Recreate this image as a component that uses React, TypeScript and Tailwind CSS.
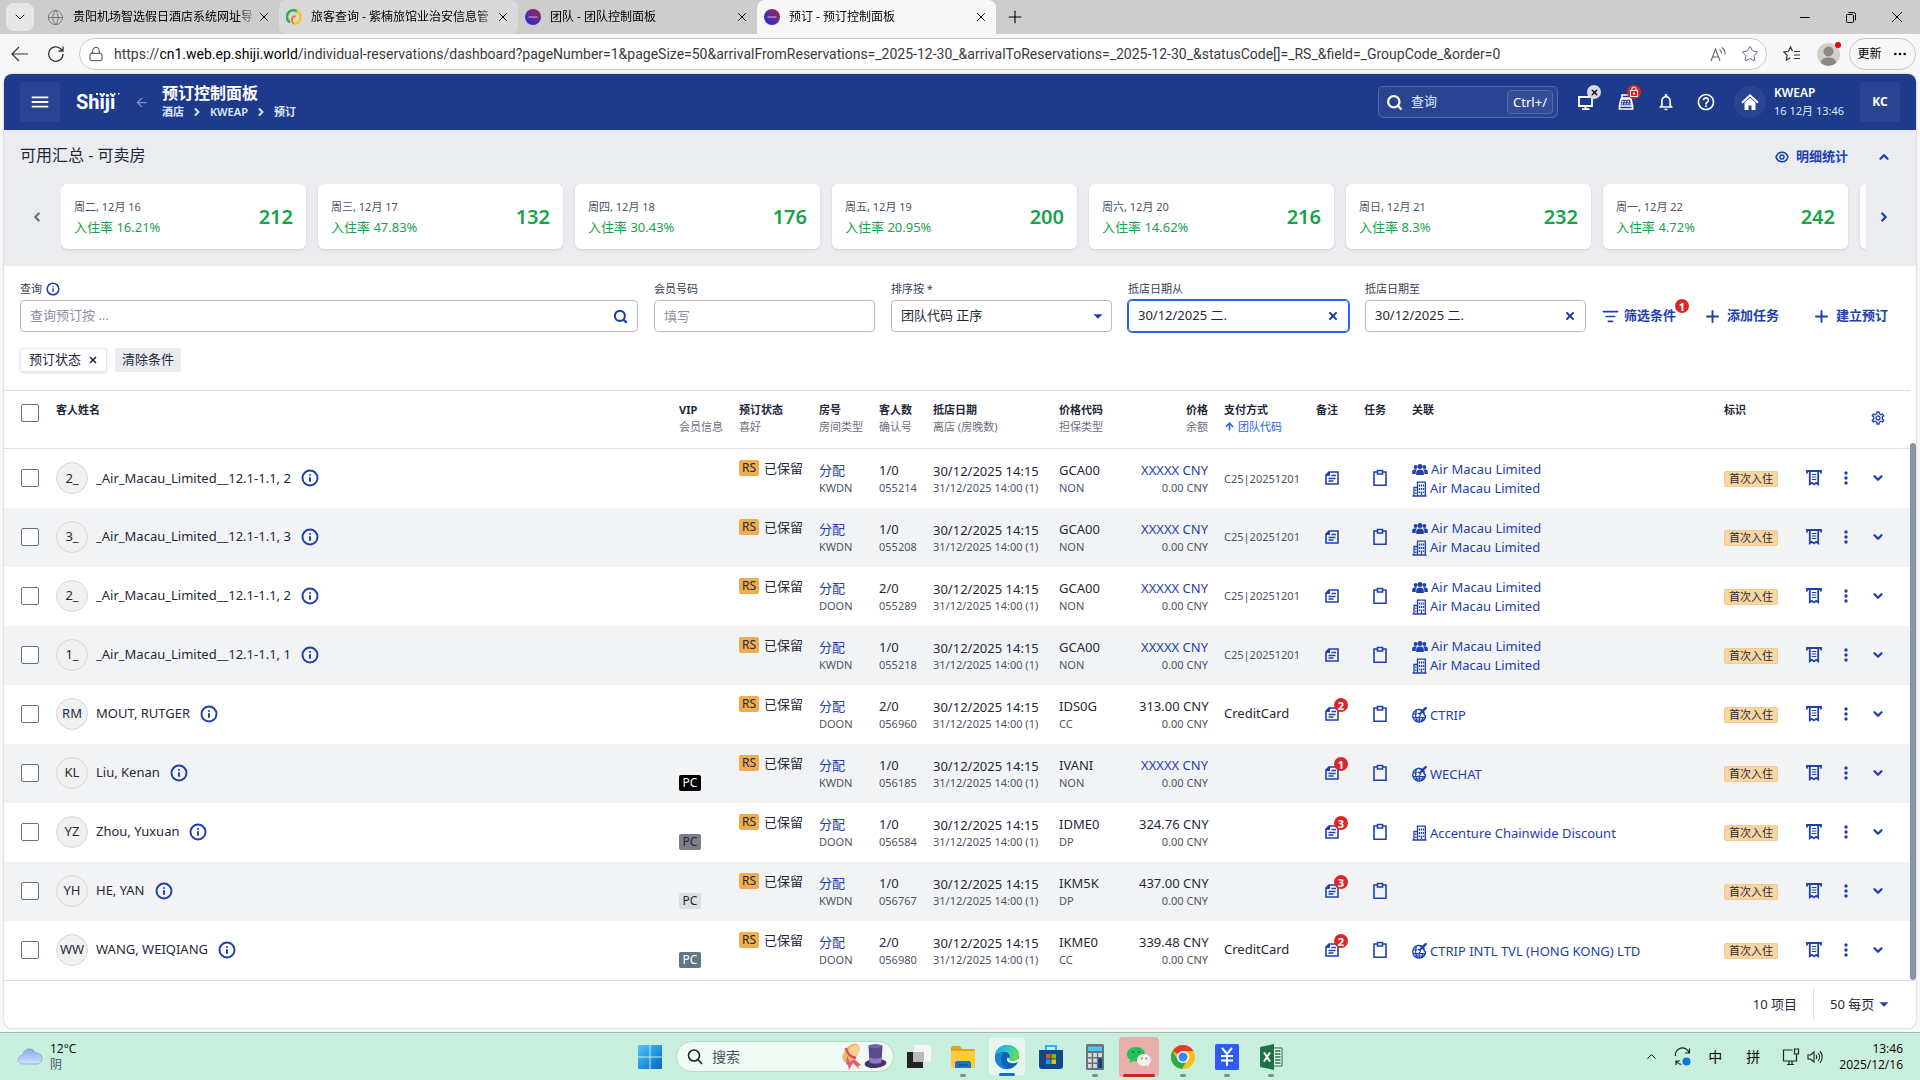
import type { ReactNode } from "react";
import {
  MdArrowBack,
  MdArrowDropDown,
  MdHelpOutline,
  MdLockOutline,
  MdMenu,
  MdMoreVert,
  MdNotificationsNone,
  MdOutlineSettings,
} from "react-icons/md";
import {
  ArrowUp,
  ChevronDown,
  ChevronLeft,
  ChevronRight,
  ChevronUp,
  Globe,
  Info,
  ListFilter,
  Lock,
  MoreHorizontal,
  Plus,
  Search,
  Star,
  X,
} from "lucide-react";

type LinkKind = "group" | "company" | "agent";

type Reservation = {
  initials: string;
  name: string;
  vip?: string;
  room: string;
  guests: string;
  conf: string;
  rate: string;
  guarantee: string;
  price: string | null;
  payment?: string;
  groupCode?: string;
  notes: number;
  links: { kind: LinkKind; label: string }[];
};

const macau: Reservation["links"] = [
  { kind: "group", label: "Air Macau Limited" },
  { kind: "company", label: "Air Macau Limited" },
];

const reservations: Reservation[] = [
  { initials: "2_", name: "_Air_Macau_Limited__12.1-1.1, 2", room: "KWDN", guests: "1/0", conf: "055214", rate: "GCA00", guarantee: "NON", price: null, groupCode: "C25|20251201", notes: 0, links: macau },
  { initials: "3_", name: "_Air_Macau_Limited__12.1-1.1, 3", room: "KWDN", guests: "1/0", conf: "055208", rate: "GCA00", guarantee: "NON", price: null, groupCode: "C25|20251201", notes: 0, links: macau },
  { initials: "2_", name: "_Air_Macau_Limited__12.1-1.1, 2", room: "DOON", guests: "2/0", conf: "055289", rate: "GCA00", guarantee: "NON", price: null, groupCode: "C25|20251201", notes: 0, links: macau },
  { initials: "1_", name: "_Air_Macau_Limited__12.1-1.1, 1", room: "KWDN", guests: "1/0", conf: "055218", rate: "GCA00", guarantee: "NON", price: null, groupCode: "C25|20251201", notes: 0, links: macau },
  { initials: "RM", name: "MOUT, RUTGER", room: "DOON", guests: "2/0", conf: "056960", rate: "IDS0G", guarantee: "CC", price: "313.00", payment: "CreditCard", notes: 2, links: [{ kind: "agent", label: "CTRIP" }] },
  { initials: "KL", name: "Liu, Kenan", vip: "bg-black text-white", room: "KWDN", guests: "1/0", conf: "056185", rate: "IVANI", guarantee: "NON", price: null, notes: 1, links: [{ kind: "agent", label: "WECHAT" }] },
  { initials: "YZ", name: "Zhou, Yuxuan", vip: "bg-[#7d8187] text-gray-800", room: "DOON", guests: "1/0", conf: "056584", rate: "IDME0", guarantee: "DP", price: "324.76", notes: 3, links: [{ kind: "company", label: "Accenture Chainwide Discount" }] },
  { initials: "YH", name: "HE, YAN", vip: "bg-[#d9dfe2] text-gray-800", room: "KWDN", guests: "1/0", conf: "056767", rate: "IKM5K", guarantee: "DP", price: "437.00", notes: 3, links: [] },
  { initials: "WW", name: "WANG, WEIQIANG", vip: "bg-[#5f7883] text-white", room: "DOON", guests: "2/0", conf: "056980", rate: "IKME0", guarantee: "CC", price: "339.48", payment: "CreditCard", notes: 2, links: [{ kind: "agent", label: "CTRIP INTL TVL (HONG KONG) LTD" }] },
];

const days = [
  { date: "周二, 12月 16", rate: "16.21%", rooms: 212 },
  { date: "周三, 12月 17", rate: "47.83%", rooms: 132 },
  { date: "周四, 12月 18", rate: "30.43%", rooms: 176 },
  { date: "周五, 12月 19", rate: "20.95%", rooms: 200 },
  { date: "周六, 12月 20", rate: "14.62%", rooms: 216 },
  { date: "周日, 12月 21", rate: "8.3%", rooms: 232 },
  { date: "周一, 12月 22", rate: "4.72%", rooms: 242 },
];

/* ---------- icons ---------- */

function NoteIcon() {
  return (
    <svg width="16" height="16" viewBox="0 0 16 16" fill="none" stroke="currentColor">
      <path d="M5 2h9v12H2V5z" strokeWidth="1.600" />
      <path d="M5.500 2v3.500H2z" fill="currentColor" />
      <path d="M7.500 5.500h4.500M4.500 8.500h7M4.500 11h5" strokeWidth="1.300" />
    </svg>
  );
}

function ClipboardIcon() {
  return (
    <svg width="16" height="18" viewBox="0 0 16 18" fill="none" stroke="currentColor" strokeWidth="1.6">
      <path d="M2 3h12v13.200H2z" />
      <path d="M5.500 1.500h5V5h-5z" fill="white" />
    </svg>
  );
}

function ReceiptIcon() {
  return (
    <svg width="16" height="18" viewBox="0 0 16 18" fill="none" stroke="currentColor">
      <path d="M1 2h14M1 1v3.500M15 1v3.500" strokeWidth="1.800" />
      <path d="M3.800 2v13.200l2.100-1.400L8 15.400l2.100-1.600 2.100 1.400V2" strokeWidth="1.800" />
      <path d="M5.800 5.500h4.500M5.800 8h4.500M5.800 10.500h4.500" strokeWidth="1.200" />
    </svg>
  );
}

function GroupIcon() {
  return (
    <svg width="16" height="14" viewBox="0 0 16 14" fill="currentColor">
      <circle cx="3.600" cy="4" r="1.900" />
      <circle cx="12.400" cy="4" r="1.900" />
      <circle cx="8" cy="3.500" r="2.500" />
      <path d="M4.200 12V9.500C4.200 7.400 6 6.500 8 6.500s3.800.9 3.800 3V12z" />
      <path d="M.2 11V8.800C.2 7 1.700 6.300 3.500 6.300c.6 0 1 0 1.300.2C4 7.500 3.700 8.300 3.700 9.300V11zM15.800 11V8.800c0-1.800-1.500-2.500-3.300-2.500-.6 0-1 0-1.300.2.800.8 1.100 1.800 1.100 2.800V11z" />
    </svg>
  );
}

function CompanyIcon() {
  return (
    <svg width="15" height="16" viewBox="0 0 15 16" fill="none" stroke="currentColor" strokeWidth="1.300">
      <path d="M5.500 14.500V1.200h7.800v13.300M.5 15h14M2 14.500v-8h3.500" />
      <path d="M7.500 3.500v2M9.500 3.500v2M11.500 3.500v2M7.500 7v2M9.500 7v2M11.500 7v2M3.800 8.500v1.500M3.800 11.500V13M9.500 10.500v4M7.500 10.500v1.500M11.500 10.500v1.500" />
    </svg>
  );
}

/* globe with a plane taking off over its upper right side */
function AgentIcon() {
  return (
    <svg width="15" height="16" viewBox="0 0 15 16" fill="none" stroke="currentColor">
      <path d="M6.500 2.400a6.400 6.400 0 1 0 7 5.600" strokeWidth="1.400" />
      <path d="M4.500 3.500C3 7 3.500 11 5.500 14.500M1 7h4M1 10.700h12M9.500 14.300c1.200-1.300 1.500-2.800 1.500-4.300M7.300 9v6M2.500 13h9.500" strokeWidth="1.200" />
      <path d="M14.800.4c-.9-.7-2.100-.1-2.900.7l-1.300 1.300-4.300-.8-.8.900 3.500 1.800-1.600 1.700-1.500-.2-.7.700 2 1.100 1.100 2 .7-.7-.2-1.500 1.700-1.600 1.700 3.400.9-.9-.7-4.200 1.400-1.300c.8-.8 1.600-1.800 1-2.400z" fill="currentColor" stroke="none" />
    </svg>
  );
}

const linkIcons: Record<LinkKind, ReactNode> = {
  group: <GroupIcon />,
  company: <CompanyIcon />,
  agent: <AgentIcon />,
};

/* ---------- browser chrome ---------- */

function ShijiFavicon() {
  return (
    <svg width="16" height="16" viewBox="0 0 16 16">
      <defs>
        <linearGradient id="fav" x1="0" y1="1" x2="0.7" y2="0">
          <stop offset="0" stopColor="#0a2cff" />
          <stop offset="0.6" stopColor="#6a2a8c" />
          <stop offset="1" stopColor="#8a2560" />
        </linearGradient>
      </defs>
      <circle cx="8" cy="8" r="8" fill="url(#fav)" />
      <path d="M3.500 8h9" stroke="#c0a0d0" strokeWidth="1.200" />
    </svg>
  );
}

function SwirlFavicon() {
  return (
    <svg width="16" height="16" viewBox="0 0 16 16" fill="none" strokeLinecap="round">
      <path d="M3 12.500A6.500 6.500 0 0 1 11 2.300" stroke="#2fae4a" strokeWidth="2.600" />
      <path d="M11.500 2.500A6.500 6.500 0 0 1 8 14.500" stroke="#f2c81e" strokeWidth="2.600" />
      <path d="M7 14.200C4.800 11 6 7.500 9 7.300" stroke="#f47a20" strokeWidth="2" />
    </svg>
  );
}

const tabs = [
  { title: "贵阳机场智选假日酒店系统网址导", icon: <Globe size={17} strokeWidth={1.3} className="text-gray-500" />, look: "" },
  { title: "旅客查询 - 紫楠旅馆业治安信息管", icon: <SwirlFavicon />, look: "rounded-lg bg-[#d9d9d9]" },
  { title: "团队 - 团队控制面板", icon: <ShijiFavicon />, look: "" },
  { title: "预订 - 预订控制面板", icon: <ShijiFavicon />, look: "rounded-t-lg bg-[#f7f7f7]" },
];

function TabStrip() {
  return (
    <div className="flex h-[34px] items-stretch bg-[#cdcdcd]">
      <button type="button" aria-label="标签操作" className="mx-[6px] my-[3px] flex w-7 items-center justify-center rounded-lg bg-[#e6e6e6]">
        <ChevronDown size={16} strokeWidth={1.5} />
      </button>
      {tabs.map((t) => (
        <div key={t.title} className={`flex w-[239px] items-center pr-2 pl-[7px] ${t.look}`}>
          <span className="mr-[9px] shrink-0">{t.icon}</span>
          <span className="flex-1 overflow-hidden text-[12px] whitespace-nowrap [mask-image:linear-gradient(to_right,black_90%,transparent)]">{t.title}</span>
          <button type="button" aria-label="关闭标签页" className="shrink-0">
            <X size={14} strokeWidth={1.7} />
          </button>
        </div>
      ))}
      <button type="button" aria-label="新建标签页" className="px-[9px]">
        <Plus size={20} strokeWidth={1.3} />
      </button>
      <div className="ml-auto flex items-center gap-8 pr-4">
        <svg width="14" height="14" viewBox="0 0 14 14" stroke="black">
          <path d="M2 7.500h10" />
        </svg>
        <svg width="14" height="14" viewBox="0 0 14 14" fill="none" stroke="black">
          <rect x="2.500" y="4.500" width="7" height="8" rx="1" />
          <path d="M4.500 2.500h5a2 2 0 0 1 2 2v6" />
        </svg>
        <svg width="14" height="14" viewBox="0 0 14 14" stroke="black">
          <path d="M2 2l10 10M12 2L2 12" />
        </svg>
      </div>
    </div>
  );
}

function AddressBar() {
  return (
    <div className="flex h-10 items-center pr-1 pl-[11px] text-[#3b3b3b]">
      <svg width="18" height="18" viewBox="0 0 18 18" fill="none" stroke="#333" strokeWidth="1.200">
        <path d="M1 9h16M8 2L1 9l7 7" />
      </svg>
      <svg width="18" height="18" viewBox="0 0 18 18" fill="none" stroke="#333" strokeWidth="1.300" className="ml-[18px]">
        <path d="M16 9a7.200 7.200 0 1 1-2.400-5.300L16 5.800M16 1.500v4.500h-4.500" />
      </svg>
      <div className="ml-[14px] flex h-8 flex-1 items-center rounded-full border border-[#c9c9c9] bg-white pr-[7px] pl-2">
        <Lock size={16} strokeWidth={1.4} />
        <span className="ml-[10px] flex-1 overflow-hidden text-[14px] whitespace-nowrap [font-family:Roboto,sans-serif]">
          https://<span className="text-black">cn1.web.ep.shiji.world</span>
          /individual-reservations/dashboard?pageNumber=1&pageSize=50&arrivalFromReservations=_2025-12-30_&arrivalToReservations=_2025-12-30_&statusCode[]=_RS_&field=_GroupCode_&order=0
        </span>
        <svg width="17" height="17" viewBox="0 0 17 17" fill="none" stroke="#666" strokeWidth="1.100">
          <path d="M1 15L5.500 3 10 15M2.700 11h5.700M9.500 3.500a5 5 0 0 1 2 4M12 1.500a8 8 0 0 1 3 7" />
        </svg>
        <Star size={18} strokeWidth={1.2} className="ml-[14px] text-gray-600" />
      </div>
      <svg width="18" height="18" viewBox="0 0 18 18" fill="none" stroke="#333" strokeWidth="1.200" className="ml-4">
        <path d="M9.500 6.200L7.600 2 5.500 6.300l-4.600.7 3.300 3.300-.8 4.700 4-2.200M11 6.500h6M11 10h6M11 13.500h6" />
      </svg>
      <span className="relative ml-4">
        <svg width="23" height="23" viewBox="0 0 23 23">
          <circle cx="11.500" cy="11.500" r="11.500" fill="#d3d0cc" />
          <circle cx="11.500" cy="8.500" r="5" fill="#8b8783" />
          <path d="M4 20c0-4 3-5.500 7.500-5.500S19 16 19 20a11.500 11.500 0 0 1-15 0z" fill="#8b8783" />
        </svg>
        <span className="absolute -top-px -right-px h-[6px] w-[6px] rounded-full bg-red-600" />
      </span>
      <button type="button" className="ml-[9px] flex h-8 w-[67px] items-center justify-center gap-[10px] rounded-full border border-[#c9c9c9] text-[12px] text-black">
        更新
        <MoreHorizontal size={16} />
      </button>
    </div>
  );
}

/* ---------- application ---------- */

function AppHeader() {
  return (
    <header className="flex h-14 items-center bg-[#1e3a8a] px-4 text-white">
      <button type="button" aria-label="菜单" className="flex h-10 w-10 items-center justify-center rounded bg-white/5">
        <MdMenu size={22} />
      </button>
      <div className="relative ml-4 w-[44px] text-[20px] leading-8 font-bold [font-family:Roboto,sans-serif]">
        Shiji
        <svg width="24" height="2" viewBox="0 0 24 2" fill="white" className="absolute top-[7px] left-5">
          <path d="M0 0h2v2H0zM3.500 0h2v2h-2zM7 0h2v2H7zM14 0h1.500v2H14zM18 0h1.500v2H18zM22 0h1.500v1.500H22z" />
        </svg>
      </div>
      <button type="button" aria-label="返回" className="ml-[14px] text-[#8190c2]">
        <MdArrowBack size={15} />
      </button>
      <div className="ml-[13px]">
        <h1 className="text-[16px] leading-5 font-bold">预订控制面板</h1>
        <nav aria-label="路径" className="flex items-center gap-[7px] text-[11px] leading-[18px] font-semibold text-blue-100">
          <a href="#">酒店</a>
          <ChevronRight size={12} strokeWidth={4} />
          <a href="#">KWEAP</a>
          <ChevronRight size={12} strokeWidth={4} />
          <a href="#">预订</a>
        </nav>
      </div>

      <label className="ml-auto flex h-8 w-[180px] items-center gap-2 rounded-[5px] border border-[#5369aa] bg-white/5 pr-1 pl-[7px]">
        <Search size={17} strokeWidth={3.2} />
        <input aria-label="查询" placeholder="查询" className="w-0 flex-1 bg-transparent text-[13px] placeholder:text-blue-100" />
        <kbd className="rounded border border-[#5369aa] bg-white/5 px-[5px] text-[13px] leading-[22px] [font-family:inherit]">Ctrl+/</kbd>
      </label>
      <div className="ml-[18px] flex items-center gap-5">
        <button type="button" aria-label="终端" className="relative">
          <svg width="20" height="20" viewBox="0 0 20 20" fill="none" stroke="currentColor" strokeWidth="1.800">
            <path d="M3 5h13v9H3zM9.500 14v3M6 17.200h7.500" />
          </svg>
          <span className="absolute -top-[7px] -right-[5px] flex h-[14px] w-[14px] items-center justify-center rounded-full bg-[#d8dbe2] text-gray-900">
            <X size={9} strokeWidth={4} />
          </span>
        </button>
        <button type="button" aria-label="收银" className="relative">
          <svg width="20" height="20" viewBox="0 0 20 20" fill="none" stroke="currentColor" strokeWidth="1.700">
            <path d="M6 3h8v3H6zM5 7h10l1.500 7h-13zM3.500 14v3h13v-3" />
            <path d="M6 9.500h9M5.500 11.800h10" strokeDasharray="1.500 1.200" strokeWidth="1.300" />
          </svg>
          <span className="absolute -top-[7px] -right-[5px] flex h-[14px] w-[14px] items-center justify-center rounded-full bg-[#dc2626]">
            <MdLockOutline size={12} />
          </span>
        </button>
        <button type="button" aria-label="通知">
          <MdNotificationsNone size={20} />
        </button>
        <button type="button" aria-label="帮助">
          <MdHelpOutline size={20} />
        </button>
      </div>
      <div className="ml-[18px] flex items-center gap-2">
        <span className="flex h-8 w-8 items-center justify-center rounded-full bg-white/5">
          <svg width="18" height="18" viewBox="0 0 18 18" fill="none" stroke="currentColor" strokeWidth="2">
            <path d="M1 9.800L9 2.300l8 7.500" />
            <path d="M3.500 9.800L9 4.800l5.500 5V17h-4v-4.500h-3V17h-4z" fill="currentColor" stroke="none" />
          </svg>
        </span>
        <div className="w-[70px] whitespace-nowrap">
          <p className="text-[12px] leading-[18px] font-semibold">KWEAP</p>
          <p className="text-[11px] leading-[18px] text-blue-100">16 12月 13:46</p>
        </div>
      </div>
      <button type="button" className="ml-4 h-10 w-10 rounded bg-white/5 text-[12px] font-bold">
        KC
      </button>
    </header>
  );
}

function Availability() {
  return (
    <section className="bg-[#eaecf0] pt-4 pb-[13px] text-slate-700">
      <div className="flex h-[22px] items-center pr-[25px] pl-4">
        <h2 className="self-start text-[16px] leading-[18px] text-gray-800">可用汇总 - 可卖房</h2>
        <button type="button" className="ml-auto flex items-center gap-[7px] text-[13px] font-semibold text-[#1e40af]">
          <svg width="14" height="14" viewBox="0 0 14 14" fill="none" stroke="currentColor" strokeWidth="1.500">
            <path d="M7 2.200c3 0 5 1.800 6 4.800-1 3-3 4.800-6 4.800S2 10 1 7c1-3 3-4.800 6-4.800z" />
            <circle cx="7" cy="7" r="2" />
          </svg>
          明细统计
        </button>
        <button type="button" aria-label="收起" className="ml-[29px] text-[#1e40af]">
          <ChevronUp size={14} strokeWidth={4} />
        </button>
      </div>
      <div className="mt-4 flex items-center">
        <button type="button" aria-label="前一页" className="flex w-[57px] shrink-0 justify-center pb-1 pl-2 text-gray-500">
          <ChevronLeft size={14} strokeWidth={4} />
        </button>
        <ul className="flex flex-1 gap-3 overflow-hidden pb-1">
          {days.map((d) => (
            <li key={d.date} className="flex h-[65px] w-[245px] shrink-0 items-center justify-between rounded-md bg-white px-[13px] shadow-sm">
              <div className="pt-[2px]">
                <p className="text-[11px] leading-[18px] text-gray-600">{d.date}</p>
                <p className="text-[13px] leading-[22px] text-[#16a34a]">入住率 {d.rate}</p>
              </div>
              <span className="text-[20px] font-semibold text-[#16a34a]">{d.rooms}</span>
            </li>
          ))}
          <li className="h-[65px] w-[245px] shrink-0 rounded-md bg-white shadow-sm" />
        </ul>
        <button type="button" aria-label="后一页" className="flex w-[50px] shrink-0 justify-center pr-[14px] pb-1 text-[#1e40af]">
          <ChevronRight size={14} strokeWidth={4} />
        </button>
      </div>
    </section>
  );
}

const fieldBox = "flex h-8 w-full items-center rounded border px-[9px] text-[13px]";

function DateField({ id, label, focused }: { id: string; label: string; focused?: boolean }) {
  return (
    <div className="w-[221px]">
      <label htmlFor={id} className="block text-[11px] leading-[22px] text-slate-700">
        {label}
      </label>
      <div className={`${fieldBox} ${focused ? "border-[#2563eb] ring-1 ring-[#2563eb]" : "border-[#b4bac6]"}`}>
        <input id={id} defaultValue="30/12/2025 二." className="w-0 flex-1 text-gray-800 outline-none" />
        <button type="button" aria-label="清除" className="text-[#1e40af]">
          <X size={12} strokeWidth={4} />
        </button>
      </div>
    </div>
  );
}

function ActionButton({ icon, children }: { icon: ReactNode; children: ReactNode }) {
  return (
    <button type="button" className="relative flex h-8 items-center gap-[5px] text-[13px] font-semibold whitespace-nowrap text-[#1e40af]">
      {icon}
      {children}
    </button>
  );
}

function Filters() {
  return (
    <section className="px-4 pt-3 pb-[18px]">
      <div className="flex items-end gap-4">
        <div className="flex-1">
          <label htmlFor="query" className="flex items-center gap-1 text-[11px] leading-[22px] text-slate-700">
            查询
            <Info size={14} strokeWidth={2.6} className="text-[#1e40af]" />
          </label>
          <div className={`${fieldBox} border-[#b4bac6]`}>
            <input id="query" placeholder="查询预订按 ..." className="w-0 flex-1 outline-none placeholder:text-[#8a93a3]" />
            <Search size={15} strokeWidth={3.4} className="text-[#1e40af]" />
          </div>
        </div>
        <div className="w-[221px]">
          <label htmlFor="member" className="block text-[11px] leading-[22px] text-slate-700">会员号码</label>
          <input id="member" placeholder="填写" className={`${fieldBox} border-[#b4bac6] placeholder:text-[#8a93a3]`} />
        </div>
        <div className="w-[221px]">
          <label htmlFor="sort" className="block text-[11px] leading-[22px] text-slate-700">排序按 *</label>
          <div className="relative">
            <select id="sort" className={`${fieldBox} appearance-none border-[#b4bac6] bg-white text-gray-800`}>
              <option>团队代码 正序</option>
            </select>
            <MdArrowDropDown size={22} className="pointer-events-none absolute top-[5px] right-[3px] text-[#1e40af]" />
          </div>
        </div>
        <DateField id="from" label="抵店日期从" focused />
        <DateField id="to" label="抵店日期至" />
        <div className="flex gap-[27px] pr-3">
          <ActionButton icon={<ListFilter size={17} strokeWidth={2.4} />}>
            筛选条件
            <span className="absolute -top-px -right-[13px] flex h-[14px] w-[14px] items-center justify-center rounded-full bg-[#dc2626] text-[11px] leading-none font-bold text-white">1</span>
          </ActionButton>
          <ActionButton icon={<Plus size={19} strokeWidth={2.4} />}>添加任务</ActionButton>
          <span className="ml-[6px]">
            <ActionButton icon={<Plus size={19} strokeWidth={2.4} />}>建立预订</ActionButton>
          </span>
        </div>
      </div>
      <div className="mt-4 flex gap-2 text-[13px] text-gray-800">
        <button type="button" className="flex h-6 items-center gap-[7px] rounded-[2px] border border-gray-200 px-2 shadow-sm">
          预订状态
          <X size={10} strokeWidth={4} />
        </button>
        <button type="button" className="h-6 rounded-[2px] bg-[#eaecf0] px-[7px]">
          清除条件
        </button>
      </div>
    </section>
  );
}

function Head({ top, sub, right }: { top?: string; sub?: ReactNode; right?: boolean }) {
  return (
    <th scope="col" className={`px-2 pt-[10px] align-top text-[11px] leading-[17px] whitespace-nowrap ${right ? "text-right" : "text-left"}`}>
      <div className="font-bold text-gray-800">{top}</div>
      <div className="font-normal text-gray-500">{sub}</div>
    </th>
  );
}

/** Two stacked values in one cell: the main one above, the minor one below. */
function Pair({ main, minor, className = "leading-[18px]", right }: { main: ReactNode; minor: ReactNode; className?: string; right?: boolean }) {
  return (
    <td className={`px-2 pt-[2px] whitespace-nowrap ${right ? "text-right" : ""}`}>
      <div className={className}>{main}</div>
      <div className="text-[11px] leading-[18px] text-gray-600">{minor}</div>
    </td>
  );
}

function Checkbox({ label }: { label: string }) {
  return <input type="checkbox" aria-label={label} className="block h-[18px] w-[18px] appearance-none rounded-[2px] border border-[#667085] bg-white" />;
}

function Row({ r }: { r: Reservation }) {
  return (
    <tr className="h-[59px] even:bg-[#f2f3f5]">
      <td className="pl-[17px]">
        <Checkbox label={r.name} />
      </td>
      <td className="px-2">
        <div className="flex items-center">
          <span className="flex h-8 w-8 items-center justify-center rounded-full border border-[#d6d8dc] bg-[#f1f1f2]">{r.initials}</span>
          <span className="ml-2">{r.name}</span>
          <button type="button" aria-label="客人信息" className="ml-[10px] text-[#1e40af]">
            <Info size={18} strokeWidth={2.6} />
          </button>
        </div>
      </td>
      <td className="px-2 pt-[31px] align-top">
        {r.vip && <span className={`block w-[22px] rounded-[2px] text-center text-[12px] leading-4 ${r.vip}`}>PC</span>}
      </td>
      <td className="px-2 pt-[11px] align-top">
        <div className="flex items-center gap-[5px] whitespace-nowrap">
          <span className="w-[21px] rounded-[2px] bg-[#f0ad4e] text-center text-[12px] leading-4">RS</span>
          <span className="leading-4">已保留</span>
        </div>
      </td>
      <Pair main={<a href="#">分配</a>} minor={r.room} className="leading-[18px] text-[#1e40af]" />
      <Pair main={r.guests} minor={r.conf} />
      <Pair main="30/12/2025 14:15" minor="31/12/2025 14:00 (1)" className="pt-[2px] leading-4" />
      <Pair main={r.rate} minor={r.guarantee} />
      <Pair right main={`${r.price ?? "XXXXX"} CNY`} minor="0.00 CNY" className={r.price ? "leading-[18px]" : "leading-[18px] text-[#1e40af]"} />
      <td className="px-2 whitespace-nowrap">
        {r.payment}
        {r.groupCode && <span className="text-[11px] text-gray-600">{r.groupCode}</span>}
      </td>
      <td>
        <button type="button" aria-label="备注" className="relative mx-auto flex text-[#1e40af]">
          <NoteIcon />
          {r.notes > 0 && (
            <span className="absolute -top-2 -right-2 flex h-[14px] w-[14px] items-center justify-center rounded-full bg-[#dc2626] text-[11px] leading-none font-bold text-white">
              {r.notes}
            </span>
          )}
        </button>
      </td>
      <td>
        <button type="button" aria-label="任务" className="mx-auto flex text-[#1e40af]">
          <ClipboardIcon />
        </button>
      </td>
      <td className="px-2 pt-[2px]">
        {r.links.map((l) => (
          <a key={l.kind} href="#" className="flex items-center gap-[3px] leading-[19px] text-[#1e40af]">
            {linkIcons[l.kind]}
            {l.label}
          </a>
        ))}
      </td>
      <td className="px-2 pt-[2px]">
        <span className="block w-[54px] rounded-[2px] border border-[#f6ca8c] bg-[#f8d6a4] text-center text-[11px] leading-[14px]">首次入住</span>
      </td>
      <td>
        <button type="button" aria-label="账单" className="mx-auto flex text-[#1e40af]">
          <ReceiptIcon />
        </button>
      </td>
      <td>
        <button type="button" aria-label="更多" className="mx-auto flex text-[#1e40af]">
          <MdMoreVert size={20} />
        </button>
      </td>
      <td>
        <button type="button" aria-label="展开" className="mx-auto flex text-[#1e40af]">
          <ChevronDown size={14} strokeWidth={4} />
        </button>
      </td>
      <td />
    </tr>
  );
}

function ReservationTable() {
  return (
    <div className="flex">
      <div className="flex-1">
        <table className="w-full table-fixed border-collapse text-[13px] text-gray-800">
          <colgroup>
            <col className="w-[44px]" />
            <col />
            <col className="w-[60px]" />
            <col className="w-[80px]" />
            <col className="w-[60px]" />
            <col className="w-[54px]" />
            <col className="w-[126px]" />
            <col className="w-[80px]" />
            <col className="w-[85px]" />
            <col className="w-[92px]" />
            <col className="w-[48px]" />
            <col className="w-[48px]" />
            <col className="w-[312px]" />
            <col className="w-[82px]" />
            <col className="w-[32px]" />
            <col className="w-[32px]" />
            <col className="w-[32px]" />
            <col className="w-[16px]" />
          </colgroup>
          <thead>
            <tr className="h-[58px] border-y border-[#dcdfe5]">
              <td className="pt-[13px] pl-[17px] align-top">
                <Checkbox label="全选" />
              </td>
              <Head top="客人姓名" />
              <Head top="VIP" sub="会员信息" />
              <Head top="预订状态" sub="喜好" />
              <Head top="房号" sub="房间类型" />
              <Head top="客人数" sub="确认号" />
              <Head top="抵店日期" sub="离店 (房晚数)" />
              <Head top="价格代码" sub="担保类型" />
              <Head right top="价格" sub="余额" />
              <Head
                top="支付方式"
                sub={
                  <span className="flex items-center gap-[3px] text-[#2563eb]">
                    <ArrowUp size={11} strokeWidth={3.5} />
                    团队代码
                  </span>
                }
              />
              <Head top="备注" />
              <Head top="任务" />
              <Head top="关联" />
              <Head top="标识" />
              <td />
              <td />
              <td className="pb-[3px]">
                <button type="button" aria-label="列设置" className="mx-auto flex text-[#1e40af]">
                  <MdOutlineSettings size={16} />
                </button>
              </td>
              <td />
            </tr>
          </thead>
          <tbody>
            {reservations.map((r) => (
              <Row key={r.conf} r={r} />
            ))}
          </tbody>
        </table>
      </div>
      <div className="mt-[53px] w-[6px] rounded-full bg-[#8893a3]" />
    </div>
  );
}

/* ---------- taskbar ---------- */

function TaskItem({ children, dot = true }: { children: ReactNode; dot?: boolean }) {
  return (
    <button type="button" className="relative flex h-10 w-11 items-center justify-center">
      {children}
      {dot && <span className="absolute bottom-0 left-[19px] h-[3px] w-[6px] rounded-full bg-[#7c8f87]" />}
    </button>
  );
}

function Taskbar() {
  return (
    <footer className="relative flex h-12 items-center justify-between border-t border-[#9fbcae] bg-[#c8eedd] text-[12px]">
      <div className="flex items-center gap-[7px] pl-[18px] leading-4">
        <svg width="25" height="17" viewBox="0 0 25 17">
          <defs>
            <linearGradient id="cloud" x1="0" y1="0" x2="0" y2="1">
              <stop offset="0" stopColor="#86a9ec" />
              <stop offset="1" stopColor="#d4e2fb" />
            </linearGradient>
          </defs>
          <path d="M5 16a4.500 4.500 0 0 1 0-9 6.500 6.500 0 0 1 12.500-2A5.500 5.500 0 0 1 19.500 16z" fill="url(#cloud)" stroke="#7d9fe0" strokeWidth=".7" />
        </svg>
        <div>
          <p>12°C</p>
          <p className="text-gray-600">阴</p>
        </div>
      </div>

      <div className="absolute left-1/2 flex -translate-x-1/2 items-center pl-[11px]">
        <button type="button" aria-label="开始" className="mr-[14px]">
          <svg width="24" height="24" viewBox="0 0 24 24">
            <defs>
              <linearGradient id="win" x1="0" y1="0" x2="1" y2="1">
                <stop offset="0" stopColor="#4cc8fb" />
                <stop offset="1" stopColor="#0067c5" />
              </linearGradient>
            </defs>
            <path d="M0 1a1 1 0 0 1 1-1h10.500v11.500H0zM12.500 0H23a1 1 0 0 1 1 1v10.500H12.500zM0 12.500h11.500V24H1a1 1 0 0 1-1-1zM12.500 12.500H24V23a1 1 0 0 1-1 1H12.500z" fill="url(#win)" />
          </svg>
        </button>
        <label className="mr-[3px] flex h-[31px] w-[218px] items-center gap-[9px] rounded-full border border-[#b9d6c9] bg-[#effaf5] pr-[5px] pl-[10px]">
          <svg width="16" height="18" viewBox="0 0 16 18" fill="none" stroke="#222" strokeWidth="1.600">
            <circle cx="7" cy="7.500" r="5.500" />
            <path d="M11 11.500l4 4.500" />
          </svg>
          <input aria-label="搜索" placeholder="搜索" className="w-0 flex-1 bg-transparent text-[14px] placeholder:text-gray-600" />
          <svg width="48" height="28" viewBox="0 0 48 28">
            {/* straw hat with a ribbon */}
            <ellipse cx="11" cy="10" rx="11" ry="6.500" fill="#efb568" transform="rotate(-50 11 10)" />
            <ellipse cx="14" cy="8" rx="7" ry="5" fill="#f7cf94" transform="rotate(-50 14 8)" />
            <path d="M6 5c1 5 4 9 10 10" fill="none" stroke="#e04a66" strokeWidth="2.500" />
            <path d="M7 13l3 6 4-3 7 6-3 1 1 3-6-6-4 7-1-5-2-1z" fill="#e85a74" />
            {/* top hat */}
            <ellipse cx="35.500" cy="20.500" rx="11" ry="4.500" fill="#43356b" transform="rotate(-4 35 20)" />
            <path d="M28.500 3c4-2 11-2 14 0l-1 17c-3 2-9 2-12 0z" fill="#5a4a8a" />
            <path d="M29.200 14c4 2 9 2 12.700 0l-.3 5c-4 2-8 2-12.100 0z" fill="#8b7bd0" />
            <ellipse cx="35.500" cy="3" rx="7" ry="1.800" fill="#7464ac" />
          </svg>
        </label>
        <TaskItem dot={false}>
          <svg width="24" height="24" viewBox="0 0 24 24">
            <path d="M0 7h16v16H0z" fill="#222" />
            <path d="M7 0h17v17H7z" fill="#f4f4f4" />
            <path d="M6 7h11v10H6z" fill="#b5b9b7" />
          </svg>
        </TaskItem>
        <TaskItem>
          <svg width="26" height="24" viewBox="0 0 26 24">
            <path d="M1 3a2 2 0 0 1 2-2h7l2 3h12a1 1 0 0 1 1 1v4H1z" fill="#e0a21a" />
            <path d="M1 6h24v16a1 1 0 0 1-1 1H2a1 1 0 0 1-1-1z" fill="#fccb3d" />
            <path d="M5 23v-5a2 2 0 0 1 2-2h12a2 2 0 0 1 2 2v5z" fill="#1a76c6" />
            <path d="M8.500 20h9" stroke="#0c4e8c" strokeWidth="1.600" />
          </svg>
        </TaskItem>
        <button type="button" aria-label="Edge" className="relative mx-[3px] flex h-[39px] w-[38px] items-center justify-center rounded-[4px] border border-[#d3ece1] bg-[#e4f6ee]">
          <svg width="26" height="26" viewBox="0 0 26 26">
            <defs>
              <linearGradient id="edge" x1="0" y1="0" x2="1" y2="0.4">
                <stop offset="0" stopColor="#1b9de2" />
                <stop offset="0.5" stopColor="#2bc3d2" />
                <stop offset="1" stopColor="#5fdc5a" />
              </linearGradient>
            </defs>
            <circle cx="13" cy="13" r="12" fill="#0f5fb4" />
            <path d="M1 13C1 6 6 1 13 1s12 4.500 12 10c0 4-3 6-6.500 6-2.500 0-4-1-3.500-2.500 2-3-.5-6.500-4-6.500C6 8 1.500 10 1 13z" fill="url(#edge)" />
            <path d="M1 14c1-4 5-6 9-5-4 3-4 12 3 16C6 25 1 20 1 14z" fill="#1683d8" />
            <path d="M14 13.500c-1.500 1-1.500 3 0 4.300 2.500 2 6.500 1.800 9.500.2l2.500 0v-3l-2-.5c-1.500 2-3.500 2.500-5.500 2.500-2.500 0-4-1-3.500-2.500z" fill="#e4f6ee" />
          </svg>
          <span className="absolute -bottom-px h-[3px] w-4 rounded-full bg-[#0074d6]" />
        </button>
        <TaskItem dot={false}>
          <svg width="24" height="26" viewBox="0 0 24 26">
            <path d="M7 7V2h10v5" fill="none" stroke="#27b7ee" strokeWidth="2" />
            <path d="M0 6h24v16a3 3 0 0 1-3 3H3a3 3 0 0 1-3-3z" fill="#12478a" />
            <path d="M7 10h4.500v4.500H7z" fill="#f25022" />
            <path d="M12.500 10H17v4.500h-4.500z" fill="#7fba00" />
            <path d="M7 15.500h4.500V20H7z" fill="#00a4ef" />
            <path d="M12.500 15.500H17V20h-4.500z" fill="#ffb900" />
          </svg>
        </TaskItem>
        <TaskItem>
          <svg width="18" height="26" viewBox="0 0 18 26">
            <rect width="18" height="26" rx="1.500" fill="#67727d" />
            <path d="M2 2.500h14v4.500H2z" fill="#49c7f4" />
            <path d="M2 9h3.700v4H2zM7.200 9h3.700v4H7.200zM12.300 9H16v4h-3.700zM2 14.500h3.700v4H2zM7.200 14.500h3.700v4H7.200zM2 20h3.700v4H2zM7.200 20h3.700v4H7.200z" fill="#d5dade" />
            <path d="M12.300 14.500H16V24h-3.700z" fill="#0d3f7a" />
          </svg>
        </TaskItem>
        <button type="button" aria-label="微信" className="relative mx-[2px] flex h-10 w-10 items-center justify-center rounded-[4px] bg-[#e9aeab]">
          <svg width="26" height="22" viewBox="0 0 26 22">
            <path d="M10 1c5 0 9 3 9 7s-4 7.500-9 7.500c-1 0-2-.1-3-.4L3.500 17l.8-3C2 12.700 1 10.500 1 8c0-4 4-7 9-7z" fill="#21c35d" />
            <path d="M18 8c4 0 7 2.700 7 6 0 2-1 3.500-2.500 4.600l.5 2.400-2.600-1.400c-.8.200-1.600.4-2.400.4-4 0-7-2.700-7-6s3-6 7-6z" fill="#efefef" />
            <circle cx="7" cy="6" r="1.100" fill="#0b6f35" />
            <circle cx="13" cy="6" r="1.100" fill="#0b6f35" />
            <circle cx="15.800" cy="12.500" r=".9" fill="#888" />
            <circle cx="20.300" cy="12.500" r=".9" fill="#888" />
          </svg>
          <span className="absolute bottom-0 h-[3px] w-8 rounded-full bg-[#c42b1c]" />
        </button>
        <TaskItem>
          <svg width="24" height="24" viewBox="0 0 24 24">
            <circle cx="12" cy="12" r="12" fill="#fbc116" />
            <path d="M12 12L1.600 6A12 12 0 0 1 22.400 6H12z" fill="#e33b2e" />
            <path d="M12 12L7 15 1.600 6A12 12 0 0 0 11 24l5.500-9.500z" fill="#2da94f" />
            <circle cx="12" cy="12" r="6" fill="white" />
            <circle cx="12" cy="12" r="4.600" fill="#4285f4" />
          </svg>
        </TaskItem>
        <TaskItem>
          <svg width="24" height="26" viewBox="0 0 24 26">
            <rect width="24" height="26" rx="1.500" fill="#2f5bf5" />
            <path d="M7 4l5 6 5-6M12 10v12M6 12h12M6 16.500h12" fill="none" stroke="white" strokeWidth="2" />
          </svg>
        </TaskItem>
        <TaskItem>
          <svg width="23" height="26" viewBox="0 0 23 26">
            <path d="M13 4h9v18h-9z" fill="#f4faf6" stroke="#1e7145" />
            <path d="M15 7h5.500M15 10h5.500M15 13h5.500M15 16h5.500M15 19h5.500" stroke="#1e7145" strokeWidth="1.500" />
            <path d="M0 3l14-3v26L0 23z" fill="#1e7145" />
            <path d="M4 8.500l6 9M10 8.500l-6 9" stroke="white" strokeWidth="2" />
          </svg>
        </TaskItem>
      </div>

      <div className="flex items-center pr-[17px]">
        <ChevronUp size={15} strokeWidth={1.6} />
        <svg width="18" height="20" viewBox="0 0 18 20" fill="none" stroke="#222" strokeWidth="1.200" className="ml-[15px]">
          <path d="M1.500 9A7 7 0 0 1 15 5.500M15.500 1.500v4.500H11M2 18v-4h4M2.500 14.500a7 7 0 0 0 5 3" />
          <circle cx="12.500" cy="14.500" r="4" fill="#0a78d4" stroke="none" />
        </svg>
        <span className="ml-4 text-[14px]">中</span>
        <span className="ml-6 text-[14px]">拼</span>
        <svg width="18" height="18" viewBox="0 0 18 18" fill="none" stroke="#222" strokeWidth="1.200" className="ml-[22px]">
          <path d="M10.500 2H1.500v11h13V8M5 16.500h7M7 13v3.500M10 13v3.500M12.500 1h4v5h-4zM14.500 6v4" />
        </svg>
        <svg width="17" height="16" viewBox="0 0 17 16" fill="none" stroke="#222" strokeWidth="1.100" className="ml-[7px]">
          <path d="M1 6h2.500L7 3v10l-3.500-3H1zM9 6a3 3 0 0 1 0 4M11 4a6 6 0 0 1 0 8M13 2.200a9 9 0 0 1 0 11.600" />
        </svg>
        <div className="ml-[15px] text-right leading-4">
          <p>13:46</p>
          <p>2025/12/16</p>
        </div>
      </div>
    </footer>
  );
}

export default function App() {
  return (
    <div className="flex min-h-screen flex-col bg-[#f7f7f7] text-black [font-family:'Open_Sans','Noto_Sans_CJK_SC',sans-serif]">
      <TabStrip />
      <AddressBar />
      <main className="mx-1 mb-1 flex flex-1 flex-col overflow-hidden rounded-lg bg-white shadow-[0_0_2px_rgba(0,0,0,0.3)] [font-family:'Noto_Sans','Noto_Sans_CJK_SC',sans-serif]">
        <AppHeader />
        <Availability />
        <Filters />
        <ReservationTable />
        <div className="flex flex-1 items-center justify-end border-t border-[#dcdfe5] pr-[25px] text-[13px] text-gray-800">
          <span className="pr-4">10 项目</span>
          <label className="relative flex items-center border-l border-[#dcdfe5] py-[6px] pl-4">
            <select aria-label="每页条数" className="appearance-none pr-4 leading-5">
              <option>50 每页</option>
            </select>
            <MdArrowDropDown size={22} className="pointer-events-none absolute -right-1 text-[#1e40af]" />
          </label>
        </div>
      </main>
      <Taskbar />
    </div>
  );
}
